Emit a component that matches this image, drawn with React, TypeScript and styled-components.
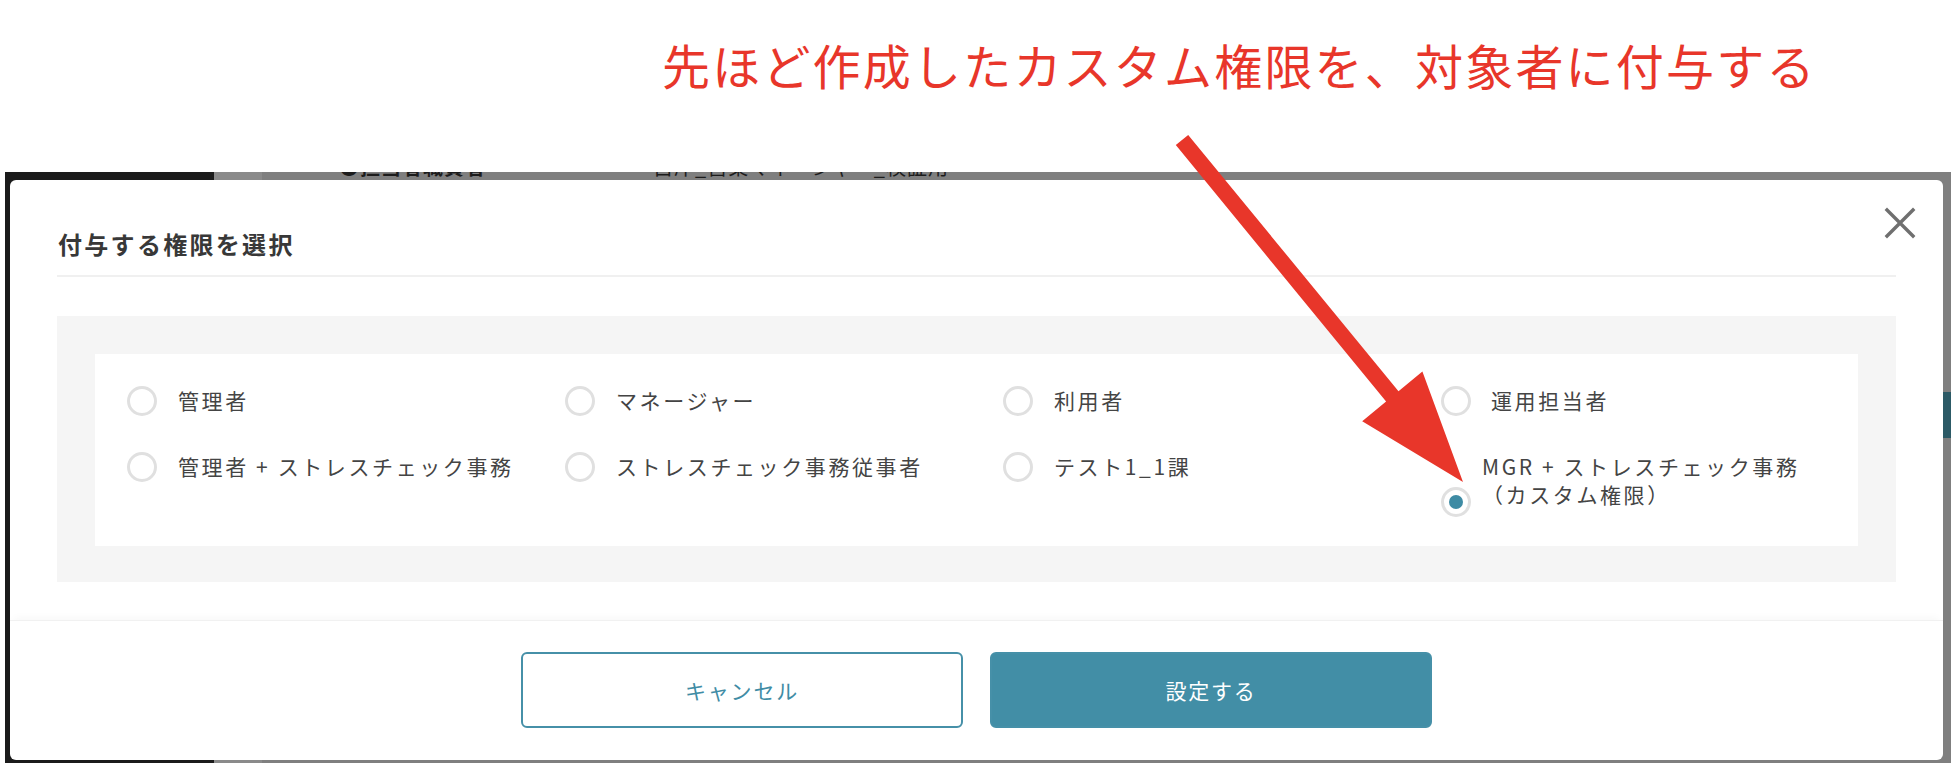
import React from "react";
import styled, { createGlobalStyle } from "styled-components";

const GlobalStyle = createGlobalStyle`
  html, body { margin: 0; padding: 0; background: #ffffff; }
  body { font-family: "Noto Sans CJK JP", "Noto Sans", sans-serif; }
  * { box-sizing: border-box; }
`;

const Page = styled.div`
  position: relative;
  width: 1960px;
  height: 780px;
  overflow: hidden;
  background: #ffffff;
`;

const Annotation = styled.div`
  height: 172px;
  padding: 32px 0 0 662px;
  font-size: 48px;
  line-height: 64px;
  letter-spacing: 2.2px;
  color: #e8362a;
  font-weight: 400;
  white-space: nowrap;
`;

const Backdrop = styled.div`
  position: relative;
  margin-left: 5px;
  width: 1946px;
  height: 591px;
  padding: 8px 8px 3px 5px;
  background: linear-gradient(
    to right,
    #1b1b1b 0px,
    #1b1b1b 209px,
    #8a8a8a 209px,
    #8a8a8a 257px,
    #7f7f7f 257px
  );
`;

const PeekStrip = styled.div`
  position: absolute;
  top: 0;
  left: 0;
  right: 0;
  height: 8px;
  overflow: hidden;
`;

const PeekText = styled.span<{ $left: number; $bold?: boolean }>`
  position: absolute;
  top: -15px;
  left: ${(p) => p.$left}px;
  font-size: 20px;
  line-height: 20px;
  letter-spacing: 1px;
  font-weight: ${(p) => (p.$bold ? 700 : 400)};
  color: #1c1c1c;
  white-space: nowrap;
`;

const PeekTeal = styled.div`
  position: absolute;
  top: 220px;
  left: 1938px;
  width: 8px;
  height: 46px;
  background: #2c5a66;
`;

const Modal = styled.div`
  position: relative;
  z-index: 1;
  width: 1933px;
  height: 580px;
  background: #ffffff;
  border-radius: 6px;
  display: flex;
  flex-direction: column;
`;

const Header = styled.div`
  margin: 0 47px;
  padding: 48px 0 15px 1px;
  border-bottom: 2px solid #f0f0f0;
`;

const Title = styled.h2`
  margin: 0;
  font-size: 24px;
  line-height: 32px;
  font-weight: 700;
  letter-spacing: 2.3px;
  color: #383838;
`;

const CloseButton = styled.button`
  position: absolute;
  top: 27px;
  right: 27px;
  width: 32px;
  height: 32px;
  padding: 0;
  border: none;
  background: transparent;
  cursor: pointer;
  display: flex;
  align-items: center;
  justify-content: center;
`;

const Body = styled.div`
  padding: 39px 47px 38px;
`;

const Panel = styled.div`
  background: #f5f5f5;
  padding: 38px 38px 36px;
`;

const OptionsBox = styled.div`
  background: #ffffff;
  padding: 32px 0 36px 32px;
  display: grid;
  grid-template-columns: repeat(4, 438px);
  row-gap: 36px;
  align-items: start;
`;

const Option = styled.label`
  display: flex;
  align-items: flex-end;
  cursor: pointer;
`;

const Radio = styled.span<{ $checked?: boolean; $gap: number; $drop: number }>`
  flex-shrink: 0;
  width: 30px;
  height: 30px;
  border-radius: 50%;
  border: 3px solid #e0e0e0;
  background: #ffffff;
  margin-right: ${(p) => p.$gap}px;
  margin-bottom: ${(p) => -p.$drop}px;
  display: flex;
  align-items: center;
  justify-content: center;

  &::after {
    content: "";
    display: ${(p) => (p.$checked ? "block" : "none")};
    width: 14px;
    height: 14px;
    border-radius: 50%;
    background: #3e8ba4;
  }
`;

const OptionText = styled.span`
  font-size: 21px;
  line-height: 28px;
  padding-bottom: 2px;
  letter-spacing: 2.6px;
  color: #444444;
  white-space: nowrap;
`;

const Footer = styled.div`
  flex: 1;
  border-top: 1px solid #f1f1f1;
  box-shadow: 0 -6px 8px -4px rgba(0, 0, 0, 0.035);
  display: flex;
  justify-content: center;
  align-items: flex-start;
  padding-top: 31px;
  gap: 27px;
`;

const Button = styled.button<{ $primary?: boolean }>`
  width: 442px;
  height: 76px;
  border-radius: 6px;
  border: 2px solid #4690a8;
  background: ${(p) => (p.$primary ? "#428ea6" : "#ffffff")};
  color: ${(p) => (p.$primary ? "#ffffff" : "#3f8ca5")};
  font-family: "Noto Sans CJK JP", "Noto Sans", sans-serif;
  font-size: 21px;
  letter-spacing: 1.8px;
  cursor: pointer;
`;

const ArrowLayer = styled.svg`
  position: absolute;
  top: 0;
  left: 0;
  z-index: 5;
  pointer-events: none;
`;

type Opt = {
  lines: string[];
  checked?: boolean;
  gap?: number;
  drop?: number;
};

const options: Opt[] = [
  { lines: ["管理者"] },
  { lines: ["マネージャー"] },
  { lines: ["利用者"] },
  { lines: ["運用担当者"], gap: 20 },
  { lines: ["管理者 + ストレスチェック事務"] },
  { lines: ["ストレスチェック事務従事者"] },
  { lines: ["テスト1_1課"] },
  {
    lines: ["MGR + ストレスチェック事務", "（カスタム権限）"],
    checked: true,
    gap: 11,
    drop: 7,
  },
];

export default function App() {
  return (
    <>
      <GlobalStyle />
      <Page>
        <Annotation>先ほど作成したカスタム権限を、対象者に付与する</Annotation>
        <Backdrop>
          <PeekStrip>
            <PeekText $left={334} $bold>
              ●担当者職責者
            </PeekText>
            <PeekText $left={648}>自岸_営業マネージャー_検証用</PeekText>
          </PeekStrip>
          <PeekTeal />
          <Modal>
            <Header>
              <Title>付与する権限を選択</Title>
            </Header>
            <CloseButton aria-label="閉じる">
              <svg width="32" height="32" viewBox="0 0 32 32">
                <path
                  d="M3 3 L29 29 M29 3 L3 29"
                  stroke="#6f6f6f"
                  strokeWidth="3.4"
                  strokeLinecap="square"
                  fill="none"
                />
              </svg>
            </CloseButton>
            <Body>
              <Panel>
                <OptionsBox>
                  {options.map((o, i) => (
                    <Option key={i}>
                      <Radio
                        $checked={o.checked}
                        $gap={o.gap ?? 21}
                        $drop={o.drop ?? 0}
                      />
                      <OptionText>
                        {o.lines.map((l, j) => (
                          <React.Fragment key={j}>
                            {j > 0 && <br />}
                            {l}
                          </React.Fragment>
                        ))}
                      </OptionText>
                    </Option>
                  ))}
                </OptionsBox>
              </Panel>
            </Body>
            <Footer>
              <Button>キャンセル</Button>
              <Button $primary>設定する</Button>
            </Footer>
          </Modal>
        </Backdrop>
        <ArrowLayer width="1960" height="780" viewBox="0 0 1960 780">
          <polygon
            points="1188.2,134.9 1398.5,391.3 1422.4,371.6 1463,482 1362.2,421.2 1386.1,401.5 1175.8,145.1"
            fill="#e8362a"
          />
        </ArrowLayer>
      </Page>
    </>
  );
}
